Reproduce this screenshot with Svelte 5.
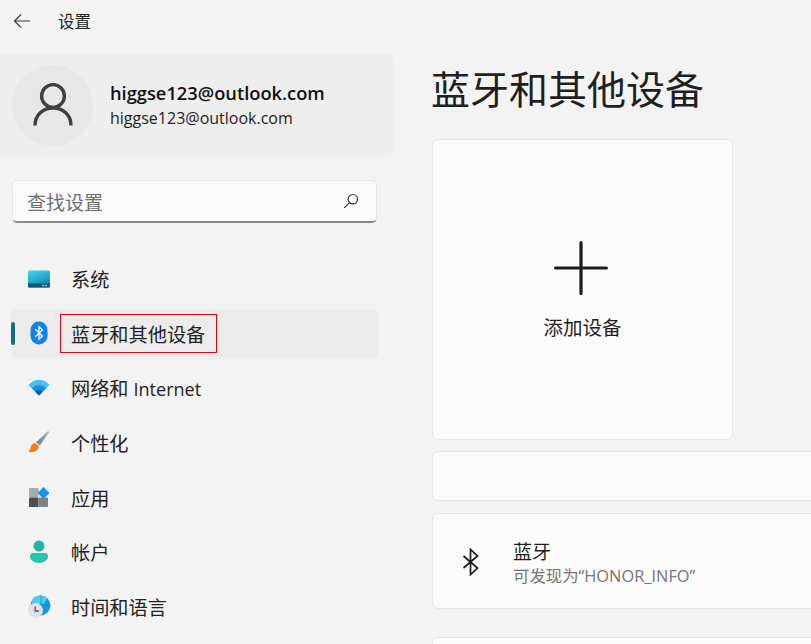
<script>
  const navItems = [
    { id: 'system', label: '系统' },
    { id: 'bluetooth', label: '蓝牙和其他设备', active: true },
    { id: 'network', label: '网络和', latin: 'Internet' },
    { id: 'personal', label: '个性化' },
    { id: 'apps', label: '应用' },
    { id: 'accounts', label: '帐户' },
    { id: 'time', label: '时间和语言' }
  ];
</script>

<div class="window">
  <aside class="sidebar">
    <header class="titlebar">
      <svg class="back" width="18" height="16" viewBox="0 0 18 16" fill="none" stroke="#3a3a3a" stroke-width="1.2">
        <path d="M17 8H1.500M8 1.500 1.500 8 8 14.500" />
      </svg>
      <span class="app-title">设置</span>
    </header>

    <section class="profile">
      <div class="avatar">
        <svg width="40" height="44" viewBox="0 0 40 44" fill="none" stroke="#404040" stroke-width="3.4">
          <circle cx="20" cy="13" r="11.4" />
          <path d="M2 42.500C2 32 10 25 20 25s18 7 18 17.500" />
        </svg>
      </div>
      <div class="who">
        <div class="name">higgse123@outlook.com</div>
        <div class="mail">higgse123@outlook.com</div>
      </div>
    </section>

    <div class="search">
      <span class="placeholder">查找设置</span>
      <svg width="16" height="16" viewBox="0 0 16 16" fill="none" stroke="#333" stroke-width="1.2">
        <circle cx="9.800" cy="6.200" r="4.700" />
        <path d="M6.400 9.600 1.200 14.800" />
      </svg>
    </div>

    <nav class="nav">
      {#each navItems as item}
        <div class="nav-item" class:active={item.active}>
          {#if item.active}<span class="indicator"></span>{/if}
          <span class="nav-icon">
            {#if item.id === 'system'}
              <svg width="24" height="18" viewBox="0 0 24 18">
                <defs>
                  <linearGradient id="scr" x1="0" y1="0" x2="0.500" y2="1">
                    <stop offset="0" stop-color="#3fdcec" />
                    <stop offset="1" stop-color="#1485b4" />
                  </linearGradient>
                </defs>
                <rect x="1" y="0.500" width="22" height="17" rx="1.500" fill="url(#scr)" />
                <path d="M1 13.500h22v2.500a1.500 1.500 0 0 1-1.500 1.500h-19A1.500 1.500 0 0 1 1 16z" fill="#115a78" />
                <rect x="15" y="14.800" width="2" height="1.400" fill="#8fb8c8" />
                <rect x="18" y="14.800" width="2" height="1.400" fill="#8fb8c8" />
              </svg>
            {:else if item.id === 'bluetooth'}
              <svg width="18" height="24" viewBox="0 0 18 24">
                <rect x="0.500" y="0.500" width="17" height="23" rx="8.500" fill="#0b84f2" />
                <path d="M5.200 8.200 12.400 15 9 18.200V5.800L12.400 9 5.200 15.800" fill="none" stroke="#fff" stroke-width="1.300" />
              </svg>
            {:else if item.id === 'network'}
              <svg width="22" height="17" viewBox="0 0 22 17">
                <path d="M0.500 6C3.500 2.500 7 .8 11 .8S18.500 2.500 21.500 6L11 16.500z" fill="#45c3f5" />
                <path d="M3.800 9.300C5.800 7.200 8.200 6 11 6s5.200 1.200 7.200 3.300L11 16.500z" fill="#1a8fe0" />
                <path d="M7.200 12.800c1-1.100 2.300-1.800 3.800-1.800s2.800.7 3.800 1.800L11 16.500z" fill="#0c5cab" />
              </svg>
            {:else if item.id === 'personal'}
              <svg width="22" height="23" viewBox="0 0 22 23">
                <defs>
                  <linearGradient id="brush" x1="0" y1="1" x2="1" y2="0">
                    <stop offset="0" stop-color="#6f7c85" />
                    <stop offset="1" stop-color="#b5bcc2" />
                  </linearGradient>
                </defs>
                <path d="M19.500 .5c.8-.5 1.700.2 1.400 1L12 14.500l-4-3.300z" fill="url(#brush)" />
                <path d="M7 12c-2.500.5-3.700 2-4.300 4.200-.4 1.800-1.200 3.300-2.200 4.500 3.500.8 7.500.3 9.500-2.800.8-1.300.9-2.700.3-3.500z" fill="#f57f17" />
              </svg>
            {:else if item.id === 'apps'}
              <svg width="22" height="20" viewBox="0 0 22 20">
                <rect x="1" y="1" width="9.500" height="9.500" rx="1" fill="#a4abb1" />
                <rect x="1" y="10.500" width="9.500" height="9.500" rx="1" fill="#4b5054" />
                <rect x="10.500" y="10.500" width="9.500" height="9.500" rx="1" fill="#7c8287" />
                <path d="M15.500 0 21.500 6 15.500 12 9.500 6z" fill="#1a96f0" />
              </svg>
            {:else if item.id === 'accounts'}
              <svg width="20" height="24" viewBox="0 0 20 24">
                <circle cx="10" cy="6" r="5.500" fill="#1fb5a6" />
                <path d="M1 16.500c0-2 1-3.500 3-3.500h12c2 0 3 1.500 3 3.500 0 3.500-4 6.500-9 6.500s-9-3-9-6.500z" fill="#27c4b0" />
              </svg>
            {:else if item.id === 'time'}
              <svg width="24" height="24" viewBox="0 0 24 24">
                <circle cx="13.500" cy="10.500" r="10" fill="#1a9ae0" />
                <path d="M13.500.5a10 10 0 0 0-9.500 7l6 2 7-1 3-5a10 10 0 0 0-6.500-3z" fill="#48d0ea" />
                <path d="M14 .5v20M3.500 10.500h20" stroke="#0e7cc8" stroke-width=".6" />
                <circle cx="8.500" cy="15.500" r="7.500" fill="#dfe1e4" />
                <path d="M8.200 11.500v4.500h3.800" fill="none" stroke="#555" stroke-width="1.300" />
              </svg>
            {/if}
          </span>
          <span class="nav-label">{item.label}{#if item.latin}&nbsp;<span class="latin">{item.latin}</span>{/if}</span>
        </div>
      {/each}
      <span class="callout"></span>
    </nav>
  </aside>

  <main class="content">
    <h1>蓝牙和其他设备</h1>

    <button class="add-card">
      <svg width="54" height="54" viewBox="0 0 54 54" stroke="#1c1c1c" stroke-width="3.200" stroke-linecap="round">
        <path d="M27 1.600v50.800M1.600 27h50.800" />
      </svg>
      <span>添加设备</span>
    </button>

    <div class="card empty"></div>

    <div class="card row">
      <svg class="bt" width="18" height="28" viewBox="0 0 18 28" fill="none" stroke="#1a1a1a" stroke-width="1.700">
        <path d="M1.500 8 15.500 20 8.500 26.500V1.500L15.500 8 1.500 20" />
      </svg>
      <div class="row-text">
        <div class="row-title">蓝牙</div>
        <div class="row-sub">可发现为“HONOR_INFO”</div>
      </div>
    </div>

    <div class="card next"></div>
  </main>
</div>

<style>
  :global(body) {
    margin: 0;
    background: #f3f3f3;
  }

  .window {
    display: flex;
    width: 811px;
    height: 644px;
    overflow: hidden;
    background: #f3f3f3;
    color: #1b1b1b;
    font-family: 'Open Sans', 'Noto Sans CJK SC', sans-serif;
  }

  .sidebar {
    flex: 0 0 393px;
    display: flex;
    flex-direction: column;
  }

  .titlebar {
    height: 54px;
    padding: 0 0 13px 13px;
    box-sizing: border-box;
    display: flex;
    align-items: center;
    gap: 27px;
  }

  .app-title {
    font-size: 16.500px;
    color: #222;
  }

  .profile {
    height: 102px;
    box-sizing: border-box;
    padding: 0 12px;
    display: flex;
    align-items: center;
    gap: 17px;
    background: #eeeeee;
    border-radius: 0 6px 6px 0;
  }

  .avatar {
    width: 81px;
    height: 81px;
    border-radius: 50%;
    background: #e8e8e8;
    display: flex;
    align-items: center;
    justify-content: center;
  }

  .name {
    font-size: 18.300px;
    line-height: 26px;
    font-weight: 600;
    color: #111;
  }

  .mail {
    margin-top: 1px;
    font-size: 16px;
    line-height: 23px;
    color: #222;
  }

  .search {
    margin: 24px 16px 0 12px;
    height: 43px;
    box-sizing: border-box;
    padding: 2px 17px 0 14px;
    display: flex;
    align-items: center;
    justify-content: space-between;
    background: #fbfbfb;
    border: 1px solid #e6e6e6;
    border-bottom: 2px solid #8a8a8a;
    border-radius: 5px;
  }

  .search svg {
    margin-top: -2px;
  }

  .placeholder {
    font-size: 19px;
    color: #6f6f6f;
  }

  .nav {
    position: relative;
    margin: 31px 15px 0 11px;
    display: flex;
    flex-direction: column;
    gap: 5.700px;
  }

  .nav-item {
    position: relative;
    height: 49px;
    display: flex;
    align-items: center;
    border-radius: 6px;
    font-size: 19.200px;
    color: #222;
  }

  .nav-item.active {
    background: #ececec;
  }

  .nav-label {
    padding-top: 1px;
  }

  .indicator {
    position: absolute;
    left: 0;
    top: 13px;
    width: 4px;
    height: 23px;
    border-radius: 2px;
    background: #176d7e;
  }

  .nav-icon {
    width: 60px;
    padding-right: 5px;
    box-sizing: border-box;
    display: flex;
    justify-content: center;
  }

  .latin {
    font-size: 18px;
  }

  .callout {
    position: absolute;
    left: 49px;
    top: 60px;
    width: 157px;
    height: 39px;
    box-sizing: border-box;
    border: 1px solid #e8000d;
  }

  .content {
    flex: 1;
    min-width: 0;
    padding-left: 39px;
  }

  h1 {
    margin: 0 0 0 -1px;
    height: 139px;
    box-sizing: border-box;
    padding-top: 60px;
    font-size: 39px;
    line-height: 58px;
    font-weight: 400;
    color: #1f1f1f;
    white-space: nowrap;
  }

  .add-card {
    width: 301px;
    height: 301px;
    box-sizing: border-box;
    padding: 0;
    display: flex;
    flex-direction: column;
    align-items: center;
    background: #fbfbfb;
    border: 1px solid #e6e6e6;
    border-radius: 6px;
    font-family: inherit;
    color: #222;
  }

  .add-card svg {
    margin: 101px 3px 0 0;
  }

  .add-card span {
    margin-top: 19px;
    font-size: 19.500px;
    line-height: 28px;
  }

  .card {
    width: 460px;
    box-sizing: border-box;
    background: #fbfbfb;
    border: 1px solid #e6e6e6;
    border-radius: 6px;
  }

  .empty {
    height: 50px;
    margin-top: 11px;
  }

  .row {
    height: 96px;
    margin-top: 12px;
    padding-left: 29px;
    display: flex;
    align-items: center;
    gap: 33px;
  }

  .bt {
    margin-top: 2px;
  }

  .row-text {
    margin-top: 4px;
  }

  .row-title {
    font-size: 19px;
    line-height: 26px;
    color: #1f1f1f;
  }

  .row-sub {
    font-size: 16.400px;
    line-height: 22px;
    color: #767676;
  }

  .next {
    height: 40px;
    margin-top: 28px;
  }
</style>
